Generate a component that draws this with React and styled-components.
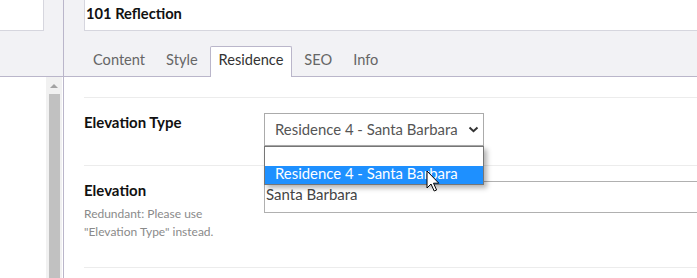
import React from "react";
import styled, { createGlobalStyle } from "styled-components";

const Global = createGlobalStyle`
  html, body { margin: 0; padding: 0; background: #fff; }
  body { font-family: Lato, "Open Sans", sans-serif; }
  * { box-sizing: border-box; }
`;

const LINE = "#bab6ca";
const PANEL = "#f2f2f5";

const Frame = styled.div`
  position: relative;
  display: flex;
  width: 697px;
  height: 278px;
  overflow: hidden;
  background: #fff;
`;

const Sidebar = styled.aside`
  flex: none;
  width: 64px;
  border-right: 1px solid ${LINE};
  display: flex;
  flex-direction: column;
`;

const SidebarHead = styled.div`
  height: 77px;
  background: ${PANEL};
  border-bottom: 1px solid ${LINE};
`;

const SearchBox = styled.div`
  width: 44px;
  height: 31px;
  background: #fff;
  border-right: 1px solid #d6d6de;
  border-bottom: 1px solid #d6d6de;
`;

const SidebarBody = styled.div`
  flex: 1;
  display: flex;
  justify-content: flex-end;
  padding-right: 1px;
`;

const Scrollbar = styled.div`
  width: 16px;
  background: #f1f1f1;
  display: flex;
  flex-direction: column;
  align-items: center;
`;

const ScrollArrow = styled.div`
  height: 17px;
  display: flex;
  align-items: center;
  justify-content: center;
  &::before {
    content: "";
    border-left: 4px solid transparent;
    border-right: 4px solid transparent;
    border-bottom: 4px solid #a3a3a3;
  }
`;

const ScrollThumb = styled.div`
  width: 11px;
  flex: 1;
  background: #c1c1c1;
`;

const Main = styled.main`
  flex: 1;
  min-width: 0;
  display: flex;
  flex-direction: column;
`;

const Header = styled.header`
  height: 77px;
  background: ${PANEL};
  border-bottom: 1px solid ${LINE};
  padding-left: 20px;
  display: flex;
  flex-direction: column;
  justify-content: space-between;
`;

const TitleBox = styled.div`
  height: 31px;
  background: #fff;
  border-left: 1px solid #d6d6de;
  border-bottom: 1px solid #d6d6de;
  padding: 4px 0 0 1px;
  font-size: 14.7px;
  line-height: 18px;
  font-weight: 700;
  color: #111;
`;

const Tabs = styled.nav`
  display: flex;
  align-items: flex-start;
  gap: 3px;
  margin-bottom: -1px;
`;

const Tab = styled.div`
  padding: 4px 8px ${(p) => (p.$active ? 8 : 7)}px;
  font-size: 14.6px;
  line-height: 18px;
  color: ${(p) => (p.$active ? "#333" : "#666")};
  background: ${(p) => (p.$active ? "#fff" : "transparent")};
  border: 1px solid ${(p) => (p.$active ? LINE : "transparent")};
  border-bottom: none;
  border-radius: 2px 2px 0 0;
`;

const Body = styled.section`
  flex: 1;
  padding: 20px 0 0 20px;
`;

const Row = styled.div`
  display: grid;
  grid-template-columns: 180px 1fr;
  border-top: 1px solid #ececec;
  padding: 15px 0 19px;
  &:last-child {
    border-bottom: 1px solid #ececec;
  }
`;

const LabelCol = styled.div`
  display: flex;
  flex-direction: column;
`;

const Label = styled.div`
  font-size: 15px;
  line-height: 18px;
  font-weight: 700;
  color: #111;
`;

const Help = styled.div`
  margin: 6px 0 7px;
  font-size: 12px;
  line-height: 18px;
  color: #8a8a8a;
`;

const SelectWrap = styled.div`
  position: relative;
  width: 220px;
  height: 33px;
`;

const SelectBox = styled.div`
  height: 33px;
  border: 1px solid #ababab;
  background: #fff;
  padding: 0 4px 0 10px;
  display: flex;
  align-items: center;
  justify-content: space-between;
  font-size: 14.9px;
  line-height: 31px;
  color: #555;
`;

const Menu = styled.div`
  position: absolute;
  top: 100%;
  left: 0;
  width: 220px;
  border: 1px solid #767676;
  background: #fff;
  box-shadow: 3px 3px 5px rgba(0, 0, 0, 0.3);
  z-index: 2;
`;

const Option = styled.div`
  height: 18.5px;
  padding: 0 0 4px 10px;
  font-size: 14.9px;
  line-height: 14.5px;
  white-space: nowrap;
  color: ${(p) => (p.$selected ? "#fff" : "#222")};
  background: ${(p) => (p.$selected ? "#1e90ff" : "#fff")};
`;

const TextInput = styled.div`
  width: 460px;
  height: 32px;
  border: 1px solid #b0b0b0;
  padding: 3px 0 0 1px;
  font-size: 15px;
  line-height: 18px;
  color: #444;
`;

const Cursor = styled.svg`
  position: absolute;
  left: 426px;
  top: 170px;
  z-index: 5;
`;

const Chevron = () => (
  <svg width="11" height="7" viewBox="0 0 11 7">
    <path d="M1.5 1.5 L5.5 5.2 L9.5 1.5" fill="none" stroke="#333" strokeWidth="2" />
  </svg>
);

export default function App() {
  return (
    <>
      <Global />
      <Frame>
        <Sidebar>
          <SidebarHead>
            <SearchBox />
          </SidebarHead>
          <SidebarBody>
            <Scrollbar>
              <ScrollArrow />
              <ScrollThumb />
            </Scrollbar>
          </SidebarBody>
        </Sidebar>
        <Main>
          <Header>
            <TitleBox>101 Reflection</TitleBox>
            <Tabs>
              <Tab>Content</Tab>
              <Tab>Style</Tab>
              <Tab $active>Residence</Tab>
              <Tab>SEO</Tab>
              <Tab>Info</Tab>
            </Tabs>
          </Header>
          <Body>
            <Row>
              <LabelCol>
                <Label>Elevation Type</Label>
              </LabelCol>
              <SelectWrap>
                <SelectBox>
                  <span>Residence 4 - Santa Barbara</span>
                  <Chevron />
                </SelectBox>
                <Menu>
                  <Option />
                  <Option $selected>Residence 4 - Santa Barbara</Option>
                </Menu>
              </SelectWrap>
            </Row>
            <Row>
              <LabelCol>
                <Label>Elevation</Label>
                <Help>
                  Redundant: Please use
                  <br />
                  "Elevation Type" instead.
                </Help>
              </LabelCol>
              <TextInput>Santa Barbara</TextInput>
            </Row>
          </Body>
        </Main>
        <Cursor width="14" height="23" viewBox="0 0 14 23">
          <path
            d="M1 1 L1 18 L5 14 L8.2 21 L10.6 20 L7.5 13.2 L12.8 13.2 Z"
            fill="#fff"
            stroke="#000"
            strokeWidth="1"
            strokeLinejoin="miter"
          />
        </Cursor>
      </Frame>
    </>
  );
}
